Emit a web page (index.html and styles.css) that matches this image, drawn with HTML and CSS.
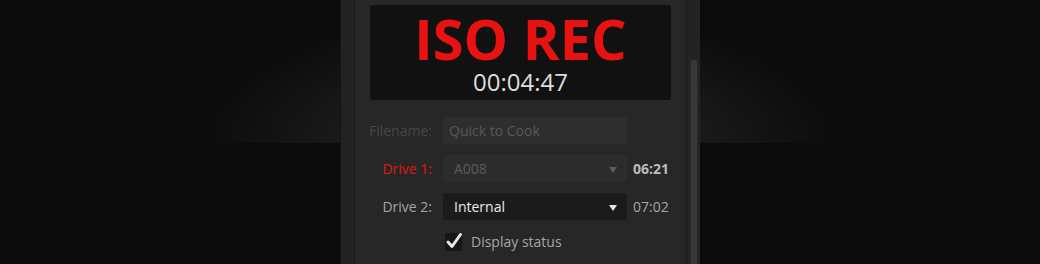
FILE: index.html
```html
<!DOCTYPE html>
<html lang="en">
    <head>
        <meta charset="UTF-8" />
        <meta name="viewport" content="width=device-width, initial-scale=1.0" />
        <title>ISO Record</title>
        <link rel="stylesheet" href="styles.css">
    </head>
    <body>
        <div class="panel">
            <div class="panel-content">
                <div class="status-box">
                    <div class="status-title">ISO REC</div>
                    <div class="status-time">00:04:47</div>
                </div>
                <div class="form">
                    <div class="form-row">
                        <span class="form-label label-dim">Filename:</span>
                        <div class="field field-disabled">Quick to Cook</div>
                    </div>
                    <div class="form-row">
                        <span class="form-label label-alert">Drive 1:</span>
                        <div class="field field-select field-muted">
                            <span>A008</span>
                            <span class="select-arrow"></span>
                        </div>
                        <span class="drive-time drive-time-bold">06:21</span>
                    </div>
                    <div class="form-row">
                        <span class="form-label">Drive 2:</span>
                        <div class="field field-select field-active">
                            <span>Internal</span>
                            <span class="select-arrow"></span>
                        </div>
                        <span class="drive-time">07:02</span>
                    </div>
                    <div class="check-row">
                        <svg class="check-box" width="20" height="20" viewBox="0 0 20 20">
                            <rect x="1" y="2" width="17" height="18" rx="2" fill="#161616" />
                            <path d="M4 11 L8 15.5 L16.5 3.5" fill="none" stroke="#e6e6e6" stroke-width="3" stroke-linecap="round" stroke-linejoin="round" />
                        </svg>
                        <span class="check-label">Display status</span>
                    </div>
                </div>
            </div>
            <div class="scrollbar">
                <div class="scrollbar-thumb"></div>
            </div>
        </div>
    </body>
</html>
```

FILE: styles.css
```css
html,
body {
    margin: 0;
    padding: 0;
    height: 100%;
}
body {
    background: radial-gradient(ellipse 325px 136px at 50% 143px, #2e2e2e 0%, #1d1d1d 45%, #0b0b0b 100%) 0 0 / 100% 143px no-repeat,
        #0b0b0b;
    font-family: "Open Sans", "Liberation Sans", sans-serif;
    overflow: hidden;
}

.panel {
    display: flex;
    width: 360px;
    height: 264px;
    margin: 0 auto;
    box-sizing: border-box;
    border-left: 1px solid #141414;
    padding-left: 13px;
    background-color: #222;
}
.panel-content {
    width: 331px;
    border-left: 1px solid #1a1a1a;
    border-right: 1px solid #1a1a1a;
    background-color: #272727;
}

.status-box {
    margin: 5px 15px 0 15px;
    height: 95px;
    box-sizing: border-box;
    padding-top: 5px;
    background-color: #111;
    border-radius: 3px;
    text-align: center;
}
.status-title {
    font-size: 56px;
    line-height: 56px;
    font-weight: 700;
    color: #e81212;
}
.status-time {
    margin-top: 4px;
    font-size: 24px;
    line-height: 24px;
    color: #dedede;
}

.form {
    padding-top: 17px;
    font-size: 14px;
}
.form-row {
    display: flex;
    align-items: center;
    height: 27px;
    margin-bottom: 11px;
}
.form-label {
    width: 77px;
    text-align: right;
    color: #a6a6a6;
}
.label-dim {
    color: #474747;
}
.label-alert {
    color: #e51515;
}

.field {
    display: flex;
    align-items: center;
    justify-content: space-between;
    width: 184px;
    height: 27px;
    margin-left: 11px;
    box-sizing: border-box;
    padding: 0 10px 0 6px;
    border-radius: 3px;
}
.field-disabled {
    background-color: #2e2e2e;
    color: #585858;
}
.field-select {
    padding-left: 11px;
}
.field-muted {
    background-color: #2c2c2c;
    color: #5c5c5c;
}
.field-active {
    background-color: #1b1b1b;
    color: #ececec;
}
.select-arrow {
    width: 0;
    height: 0;
    border-left: 4.5px solid transparent;
    border-right: 4.5px solid transparent;
    border-top: 6px solid currentColor;
    margin-top: 2px;
}
.field-muted .select-arrow {
    color: #5c5c5c;
}
.field-active .select-arrow {
    color: #e4e4e4;
}

.drive-time {
    margin-left: 6px;
    color: #a6a6a6;
}
.drive-time-bold {
    font-weight: 700;
    color: #bcbcbc;
}

.check-row {
    display: flex;
    align-items: center;
    margin-top: 3px;
    padding-left: 89px;
}
.check-box {
    display: block;
}
.check-label {
    margin-left: 7px;
    color: #a6a6a6;
}

.scrollbar {
    width: 13px;
    padding-top: 59px;
    box-sizing: border-box;
    background-color: #232323;
}
.scrollbar-thumb {
    width: 8px;
    height: 100%;
    margin-left: 3px;
    box-sizing: border-box;
    border: 1px solid #2a2a2a;
    border-bottom: none;
    border-radius: 4px 4px 0 0;
    background-color: #383838;
}
```
